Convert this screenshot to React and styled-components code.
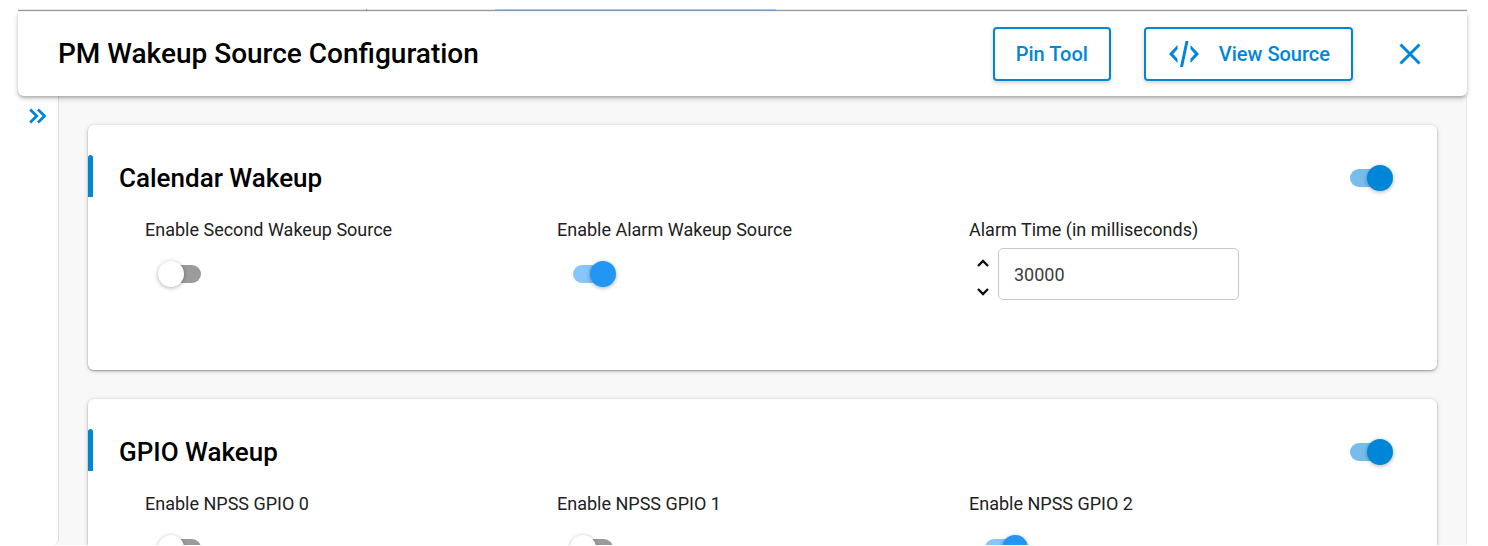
import React, { useState } from "react";
import styled, { createGlobalStyle } from "styled-components";

const GlobalStyle = createGlobalStyle`
  *, *::before, *::after { box-sizing: border-box; }
  body {
    margin: 0;
    background: #fff;
    color: #000;
    font-family: Roboto, "Liberation Sans", sans-serif;
  }
  button, input { font: inherit; }
`;

const Page = styled.div`
  display: flex;
  flex-direction: column;
  height: 100vh;
  padding: 9px 21px 1px 18px;
  overflow: hidden;
`;

const TabEdge = styled.div`
  flex: none;
  display: flex;
  height: 3px;
  border-bottom: 1px solid #f4f4f4;
  background: linear-gradient(#e6e6e6 1px, #9c9c9c 1px);
`;

const TabEdgePart = styled.span`
  flex: ${(p) => p.$grow} 1 0;
  height: 2px;
  border-right: ${(p) => (p.$tick ? "1px solid #8c8c8c" : "0")};
  background: ${(p) => (p.$active ? "linear-gradient(#a9c4ea 1px, #7f9cc6 1px)" : "none")};
`;

const Header = styled.header`
  flex: none;
  position: relative;
  z-index: 1;
  display: flex;
  align-items: center;
  height: 84px;
  padding: 0 33px 0 40px;
  border-radius: 0 0 6px 6px;
  background: #fff;
  box-shadow: 0 2px 3px rgba(0, 0, 0, 0.22), 0 3px 6px rgba(0, 0, 0, 0.12);
`;

const PageTitle = styled.h1`
  flex: 1;
  margin: 0;
  font-size: 28px;
  line-height: 32px;
  font-weight: 500;
`;

const OutlineButton = styled.button`
  display: flex;
  align-items: center;
  gap: 18px;
  height: 54px;
  margin-right: 33px;
  padding: 0 21px;
  border: 2px solid #0086d9;
  border-radius: 4px;
  background: #fff;
  color: #0086d9;
  font-size: 20px;
  line-height: 24px;
  font-weight: 500;
  white-space: nowrap;
  box-shadow: 0 2px 4px rgba(0, 0, 0, 0.18);
  cursor: pointer;
`;

const IconButton = styled.button`
  display: flex;
  align-items: center;
  justify-content: center;
  width: ${(p) => p.$size}px;
  height: ${(p) => p.$size}px;
  padding: 0;
  border: 0;
  background: none;
  color: ${(p) => p.$color || "#0086d9"};
  cursor: pointer;
`;

const Body = styled.div`
  flex: 1;
  min-height: 0;
  display: flex;
  background: #f8f8f8;
  border-right: 1px solid #eaeaea;
`;

const Rail = styled.aside`
  flex: none;
  display: flex;
  justify-content: center;
  align-items: flex-start;
  width: 41px;
  padding-top: 8px;
  border-right: 1px solid #dedede;
  border-bottom-right-radius: 6px;
  background: #fff;
`;

const Cards = styled.main`
  flex: 1;
  min-width: 0;
  display: flex;
  flex-direction: column;
  gap: 29px;
  padding: 29px 29px 0;
  overflow: hidden;
`;

const Card = styled.section`
  flex: none;
  padding: 30px 0 70px;
  border-radius: 6px;
  background: #fff;
  box-shadow: 0 1px 2px rgba(0, 0, 0, 0.3), 0 1px 5px rgba(0, 0, 0, 0.18);
`;

const CardHead = styled.div`
  display: flex;
  align-items: center;
  height: 42px;
  padding-right: 44px;
`;

const Accent = styled.span`
  align-self: stretch;
  width: 5px;
  border-radius: 3px 3px 0 0;
  background: #0086d9;
`;

const CardTitle = styled.h2`
  flex: 1;
  margin: 0;
  padding: 4px 0 0 26px;
  font-size: 26px;
  line-height: 32px;
  font-weight: 500;
`;

const HeadControl = styled.div`
  display: flex;
  padding-top: 4px;
`;

const Fields = styled.div`
  display: grid;
  grid-template-columns: repeat(3, 1fr);
  padding: 20px 56px 0 57px;
`;

const Field = styled.div`
  display: flex;
  flex-direction: column;
  gap: 5px;
`;

const Label = styled.label`
  color: #212121;
  font-size: 18px;
  line-height: 26px;
`;

const Control = styled.div`
  display: flex;
  align-items: center;
  height: 52px;
  padding-left: ${(p) => (p.$inset ? 13 : 0)}px;
`;

const Switch = styled.input.attrs({ type: "checkbox" })`
  appearance: none;
  flex: none;
  position: relative;
  display: flex;
  align-items: center;
  width: 46px;
  height: 26px;
  margin: 0;
  cursor: pointer;

  &::before {
    content: "";
    flex: 1;
    height: 18px;
    margin: 0 3px;
    border-radius: 9px;
    background: #9b9b9b;
  }
  &::after {
    content: "";
    position: absolute;
    left: 0;
    top: 0;
    width: 26px;
    height: 26px;
    border-radius: 50%;
    background: #fff;
    box-shadow: 0 1px 4px rgba(0, 0, 0, 0.32);
  }
  &:checked::before { background: ${(p) => (p.$primary ? "#77bdeb" : "#87c6fa")}; }
  &:checked::after {
    left: 20px;
    background: ${(p) => (p.$primary ? "#0086d9" : "#2196f3")};
  }
`;

const Stepper = styled.div`
  display: flex;
  flex-direction: column;
  gap: 1px;
  width: 29px;
  padding-top: 6px;
`;

const NumberInput = styled.input`
  width: 241px;
  height: 52px;
  padding: 0 15px;
  border: 1px solid #c8c8c8;
  border-radius: 5px;
  background: #fff;
  color: #3c3c3c;
  font-size: 18px;
  outline: none;
`;

const Icon = ({ width, height, d, stroke = 2 }) => (
  <svg
    width={width}
    height={height}
    viewBox={`0 0 ${width} ${height}`}
    fill="none"
    stroke="currentColor"
    strokeWidth={stroke}
    aria-hidden="true"
  >
    <path d={d} />
  </svg>
);

const CodeIcon = () => (
  <svg width="34" height="28" viewBox="0 0 34 28" fill="currentColor" aria-hidden="true">
    <path d="M2 14L10.500 5v4.300L6.200 14l4.300 4.700V23zM32 14L23.500 5v4.300l4.300 4.700-4.300 4.700V23zM18.500 1h3L16 27h-3z" />
  </svg>
);

const SECTIONS = [
  {
    id: "calendar",
    title: "Calendar Wakeup",
    fields: [
      { id: "second", label: "Enable Second Wakeup Source", on: false },
      { id: "alarm", label: "Enable Alarm Wakeup Source", on: true },
      { id: "alarm-time", label: "Alarm Time (in milliseconds)", value: 30000 },
    ],
  },
  {
    id: "gpio",
    title: "GPIO Wakeup",
    fields: [
      { id: "npss0", label: "Enable NPSS GPIO 0", on: false },
      { id: "npss1", label: "Enable NPSS GPIO 1", on: false },
      { id: "npss2", label: "Enable NPSS GPIO 2", on: true },
    ],
  },
];

function NumberField({ id, initial }) {
  const [value, setValue] = useState(initial);
  const step = (by) => setValue((v) => Number(v) + by);
  return (
    <Control>
      <Stepper>
        <IconButton type="button" $size={28} $color="#111" aria-label="Increase" onClick={() => step(1)}>
          <Icon width={12} height={8} stroke={2.4} d="M1 7l5-5 5 5" />
        </IconButton>
        <IconButton type="button" $size={28} $color="#111" aria-label="Decrease" onClick={() => step(-1)}>
          <Icon width={12} height={8} stroke={2.4} d="M1 1l5 5 5-5" />
        </IconButton>
      </Stepper>
      <NumberInput id={id} inputMode="numeric" value={value} onChange={(e) => setValue(e.target.value)} />
    </Control>
  );
}

export default function App() {
  return (
    <>
      <GlobalStyle />
      <Page>
        <TabEdge>
          <TabEdgePart $grow={348} $tick />
          <TabEdgePart $grow={128} />
          <TabEdgePart $grow={281} $active />
          <TabEdgePart $grow={691} />
        </TabEdge>
        <Header>
          <PageTitle>PM Wakeup Source Configuration</PageTitle>
          <OutlineButton type="button">Pin Tool</OutlineButton>
          <OutlineButton type="button">
            <CodeIcon />
            View Source
          </OutlineButton>
          <IconButton type="button" $size={48} aria-label="Close">
            <Icon width={22} height={22} stroke={3} d="M1.500 1.500l19 19M20.500 1.500l-19 19" />
          </IconButton>
        </Header>
        <Body>
          <Rail>
            <IconButton type="button" $size={24} aria-label="Expand sidebar">
              <Icon width={18} height={16} stroke={2.8} d="M1.200 1.500l6.500 6.500-6.500 6.500M9 1.500l6.500 6.500-6.500 6.500" />
            </IconButton>
          </Rail>
          <Cards>
            {SECTIONS.map((s) => (
              <Card key={s.id}>
                <CardHead>
                  <Accent />
                  <CardTitle id={s.id}>{s.title}</CardTitle>
                  <HeadControl>
                    <Switch $primary defaultChecked aria-labelledby={s.id} />
                  </HeadControl>
                </CardHead>
                <Fields>
                  {s.fields.map((f) => (
                    <Field key={f.id}>
                      <Label htmlFor={f.id}>{f.label}</Label>
                      {f.value !== undefined ? (
                        <NumberField id={f.id} initial={f.value} />
                      ) : (
                        <Control $inset>
                          <Switch id={f.id} defaultChecked={f.on} />
                        </Control>
                      )}
                    </Field>
                  ))}
                </Fields>
              </Card>
            ))}
          </Cards>
        </Body>
      </Page>
    </>
  );
}
